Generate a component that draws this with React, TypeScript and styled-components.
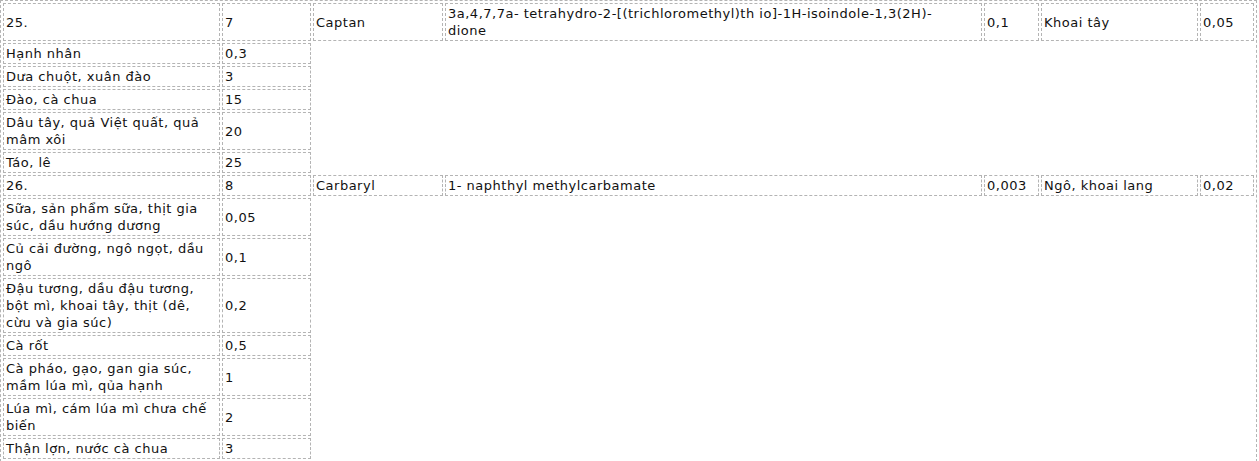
import React from "react";
import styled, { createGlobalStyle } from "styled-components";

const Global = createGlobalStyle`
  html, body { margin: 0; padding: 0; background: #fff; }
  body { font-family: "DejaVu Sans", Verdana, sans-serif; font-size: 13px; color: #000; }
`;

const Table = styled.table`
  border: 1px dashed #b4b4b4;
  border-collapse: separate;
  border-spacing: 2px;
  table-layout: fixed;
  width: 1257px;
`;

const Cell = styled.td<{ $w?: number }>`
  box-sizing: border-box;
  border: 1px dashed #b4b4b4;
  padding: 1px 2px;
  line-height: 17px;
  vertical-align: middle;
  font-family: "DejaVu Sans", Verdana, sans-serif;
  font-size: 13px;
  letter-spacing: 0.5px;
  color: #111;
  ${(p) => (p.$w ? `width: ${p.$w}px;` : "")}
`;

type Pair = [string, string];

const captanRows: Pair[] = [
  ["Hạnh nhân", "0,3"],
  ["Dưa chuột, xuân đào", "3"],
  ["Đào, cà chua", "15"],
  ["Dâu tây, quả Việt quất, quả mâm xôi", "20"],
  ["Táo, lê", "25"],
];

const carbarylRows: Pair[] = [
  ["Sữa, sản phẩm sữa, thịt gia súc, dầu hướng dương", "0,05"],
  ["Củ cải đường, ngô ngọt, dầu ngô", "0,1"],
  ["Đậu tương, dầu đậu tương, bột mì, khoai tây, thịt (dê, cừu và gia súc)", "0,2"],
  ["Cà rốt", "0,5"],
  ["Cà pháo, gạo, gan gia súc, mầm lúa mì, qủa hạnh", "1"],
  ["Lúa mì, cám lúa mì chưa chế biến", "2"],
  ["Thận lợn, nước cà chua", "3"],
];

const widths = [217, 89, 130, 537, 55, 157, 54];

const Header: React.FC<{ cells: React.ReactNode[] }> = ({ cells }) => (
  <tr>
    {cells.map((c, i) => (
      <Cell key={i} $w={widths[i]}>
        {c}
      </Cell>
    ))}
  </tr>
);

const PairRow: React.FC<{ row: Pair }> = ({ row }) => (
  <tr>
    <Cell>{row[0]}</Cell>
    <Cell>{row[1]}</Cell>
  </tr>
);

export default function App() {
  return (
    <>
      <Global />
      <Table>
        <tbody>
          <Header
            cells={[
              "25.",
              "7",
              "Captan",
              <>
                3a,4,7,7a- tetrahydro-2-[(trichloromethyl)th io]-1H-isoindole-1,3(2H)-
                <br />
                dione
              </>,
              "0,1",
              "Khoai tây",
              "0,05",
            ]}
          />
          {captanRows.map((r, i) => (
            <PairRow key={"a" + i} row={r} />
          ))}
          <tr>
            <Cell>26.</Cell>
            <Cell>8</Cell>
            <Cell>Carbaryl</Cell>
            <Cell>1- naphthyl methylcarbamate</Cell>
            <Cell>0,003</Cell>
            <Cell>Ngô, khoai lang</Cell>
            <Cell>0,02</Cell>
          </tr>
          {carbarylRows.map((r, i) => (
            <PairRow key={"b" + i} row={r} />
          ))}
        </tbody>
      </Table>
    </>
  );
}
